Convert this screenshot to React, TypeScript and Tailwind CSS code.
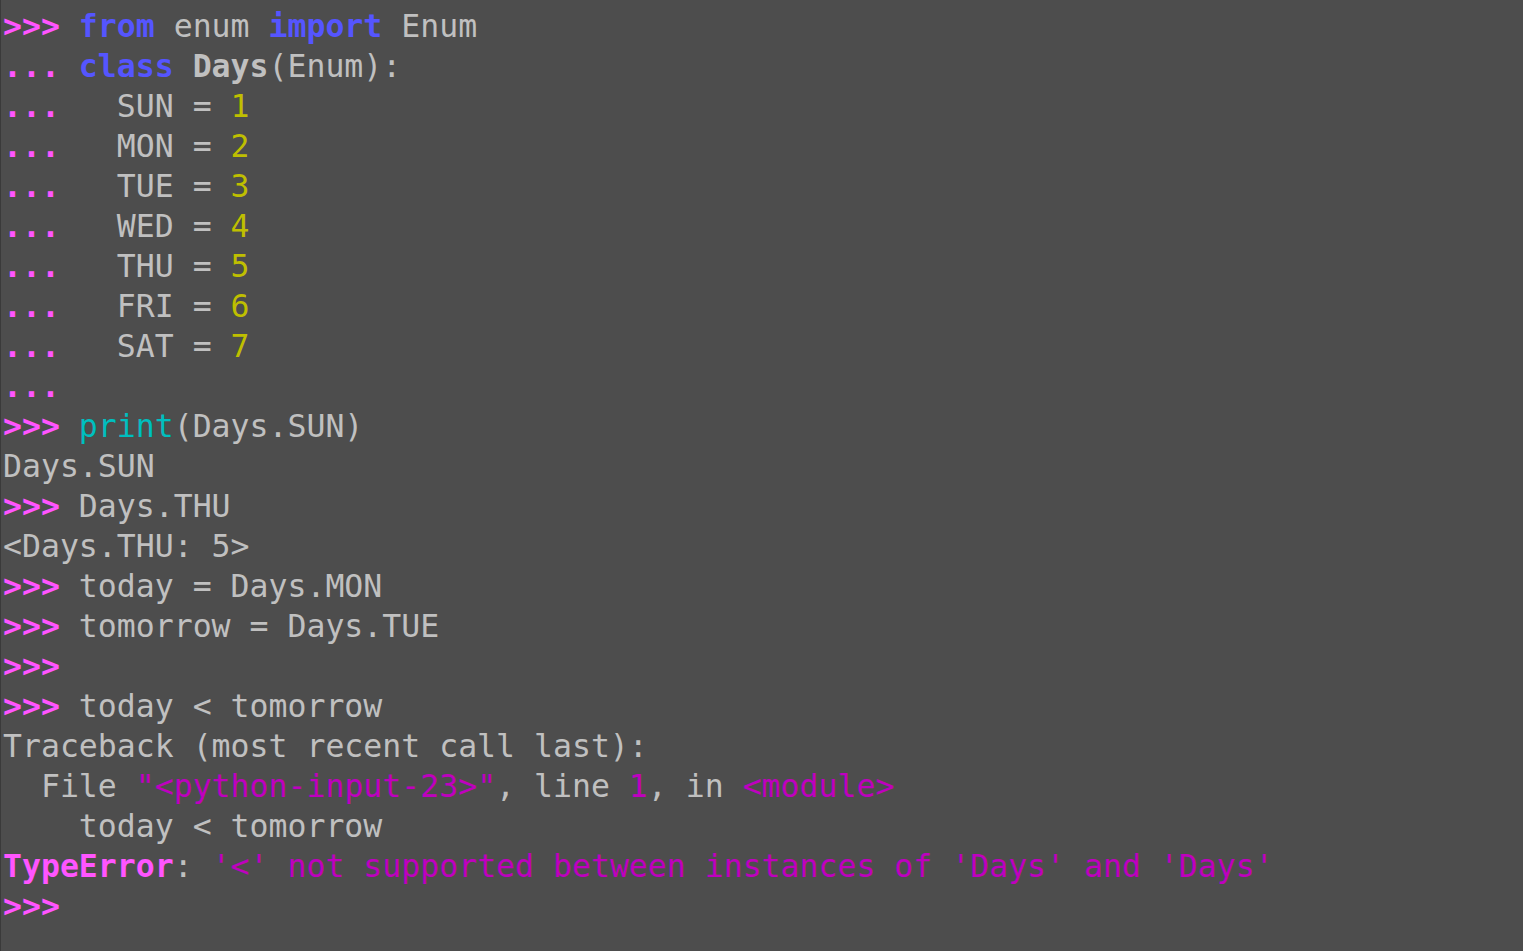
import React from "react";

const P = ({ c }: { c: string }) => <span className="text-[#ff55ff] font-bold">{c}</span>;
const K = ({ c }: { c: string }) => <span className="text-[#5555ff] font-bold">{c}</span>;
const N = ({ c }: { c: string }) => <span className="text-[#bfbf00]">{c}</span>;
const M = ({ c }: { c: string }) => <span className="text-[#bf00bf]">{c}</span>;
const C = ({ c }: { c: string }) => <span className="text-[#00bfbf]">{c}</span>;

export default function App() {
  const enumLines: [string, string][] = [
    ["SUN", "1"],
    ["MON", "2"],
    ["TUE", "3"],
    ["WED", "4"],
    ["THU", "5"],
    ["FRI", "6"],
    ["SAT", "7"],
  ];
  return (
    <div className="w-[1523px] h-[951px] bg-[#4d4d4d] border-l border-[#3a3a3a] overflow-hidden">
      <div
        className="pt-[6px] pl-[2px] text-[31.5px] leading-[40px] text-[#c0c0c0] whitespace-pre"
        style={{ fontFamily: '"DejaVu Sans Mono", monospace' }}
      >
        <div><P c=">>> " /><K c="from" /> enum <K c="import" /> Enum</div>
        <div><P c="... " /><K c="class" /> <span className="font-bold">Days</span>(Enum):</div>
        {enumLines.map(([n, v]) => (
          <div key={n}><P c="... " />  {n} = <N c={v} /></div>
        ))}
        <div><P c="..." /></div>
        <div><P c=">>> " /><C c="print" />(Days.SUN)</div>
        <div>Days.SUN</div>
        <div><P c=">>> " />Days.THU</div>
        <div>&lt;Days.THU: 5&gt;</div>
        <div><P c=">>> " />today = Days.MON</div>
        <div><P c=">>> " />tomorrow = Days.TUE</div>
        <div><P c=">>>" /></div>
        <div><P c=">>> " />today &lt; tomorrow</div>
        <div>Traceback (most recent call last):</div>
        <div>  File <M c={'"<python-input-23>"'} />, line <M c="1" />, in <M c="<module>" /></div>
        <div>    today &lt; tomorrow</div>
        <div><P c="TypeError" />: <M c="'<' not supported between instances of 'Days' and 'Days'" /></div>
        <div><P c=">>>" /></div>
      </div>
    </div>
  );
}
